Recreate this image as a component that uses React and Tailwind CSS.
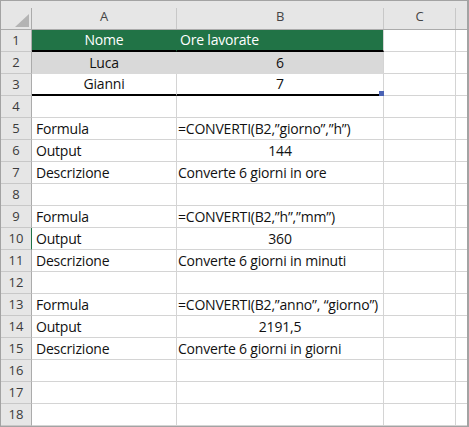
import React from 'react';

const rows = [
  { n: 1, a: 'Nome', b: 'Ore lavorate', kind: 'head' },
  { n: 2, a: 'Luca', b: '6', kind: 'band' },
  { n: 3, a: 'Gianni', b: '7', kind: 'last' },
  { n: 4 },
  { n: 5, a: 'Formula', b: '=CONVERTI(B2,”giorno”,”h”)' },
  { n: 6, a: 'Output', b: '144', center: true },
  { n: 7, a: 'Descrizione', b: 'Converte 6 giorni in ore' },
  { n: 8 },
  { n: 9, a: 'Formula', b: '=CONVERTI(B2,”h”,”mm”)' },
  { n: 10, a: 'Output', b: '360', center: true, active: true },
  { n: 11, a: 'Descrizione', b: 'Converte 6 giorni in minuti' },
  { n: 12 },
  { n: 13, a: 'Formula', b: '=CONVERTI(B2,”anno”, “giorno”)' },
  { n: 14, a: 'Output', b: '2191,5', center: true },
  { n: 15, a: 'Descrizione', b: 'Converte 6 giorni in giorni' },
  { n: 16 },
  { n: 17 },
  { n: 18 },
];

function ColHead({ label, width }) {
  return (
    <div className={`${width} h-full flex`}>
      <div className="flex-1 flex items-center justify-center pt-[2px] text-[13px] text-[#444]">{label}</div>
      <div className="w-px h-[21px] self-end bg-[#c8c8c8]" />
    </div>
  );
}

function Row({ n, a, b, kind, center, active }) {
  const base = 'h-full border-r border-b border-[#d4d4d4] flex items-center whitespace-nowrap overflow-hidden';
  let aCls = `${base} pl-[4px]`;
  let bCls = `${base} pl-[1px]`;

  if (kind === 'head') {
    aCls = `${base} justify-center bg-[#217346] text-white border-r-[#217346] border-b-2 border-b-black`;
    bCls = `${base} pl-[3px] bg-[#217346] text-white border-b-2 border-b-black`;
  } else if (kind === 'band') {
    aCls = `${base} justify-center bg-[#d9d9d9] border-[#d9d9d9]`;
    bCls = `${base} justify-center bg-[#d9d9d9] border-b-[#d9d9d9]`;
  } else if (kind === 'last') {
    aCls = `${base} justify-center border-b-2 border-b-black`;
    bCls = `${base} justify-center border-b-2 border-b-black relative overflow-visible`;
  } else if (center) {
    bCls = `${base} justify-center`;
  }

  return (
    <div className="flex h-[22px]">
      <div
        className={`w-[31px] h-full bg-[#e6e6e6] border-b border-b-[#c8c8c8] border-r flex items-center justify-center text-[13px] tracking-normal text-[#3b3b3b] ${
          active ? 'border-r-[#217346]' : 'border-r-[#ababab]'
        }`}
      >
        {n}
      </div>
      <div className={`w-[145px] ${aCls}`}>{a}</div>
      <div className={`w-[207px] ${bCls}`}>
        {b}
        {kind === 'last' && <span className="absolute right-[-1px] bottom-[-2px] w-[5px] h-[5px] bg-[#4a63b5]" />}
      </div>
      <div className={`w-[72px] ${base}`} />
      <div className={`w-[11px] ${base} border-r-0`} />
    </div>
  );
}

export default function App() {
  return (
    <div className="w-[469px] h-[427px] bg-white border-t border-l border-r-2 border-b border-[#a3a3a3] overflow-hidden font-['Open_Sans',sans-serif] text-[14px] tracking-[-0.2px] text-[#111] leading-none">
      {/* Column headers */}
      <div className="flex h-[29px] bg-[#e6e6e6] border-b border-[#ababab]">
        <div className="w-[31px] h-full flex">
          <div className="flex-1 flex items-end justify-end pb-[2px] pr-[2px]">
            <svg width="14" height="13" viewBox="0 0 14 13">
              <polygon points="0,13 14,13 14,0" fill="#b4b4b4" />
            </svg>
          </div>
          <div className="w-px h-[21px] self-end bg-[#ababab]" />
        </div>
        <ColHead label="A" width="w-[145px]" />
        <ColHead label="B" width="w-[207px]" />
        <ColHead label="C" width="w-[72px]" />
        <div className="w-[11px]" />
      </div>

      {rows.map((r) => (
        <Row key={r.n} {...r} />
      ))}
    </div>
  );
}
